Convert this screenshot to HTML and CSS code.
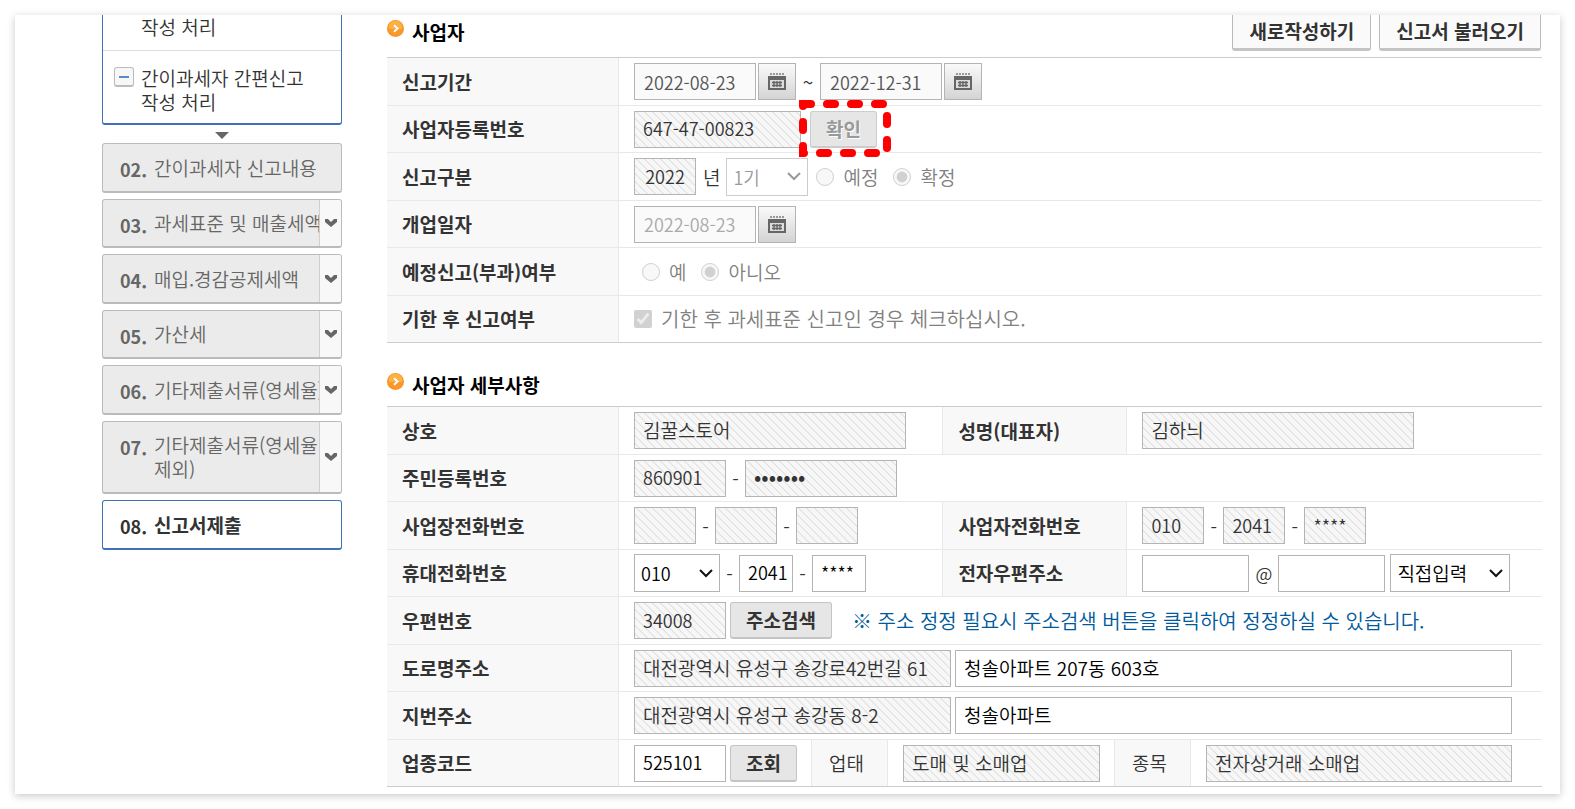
FILE: index.html
```
<!DOCTYPE html>
<html lang="ko">
<head>
  <meta charset="UTF-8">
  <meta name="viewport" content="width=device-width, initial-scale=1.0">
  <title>간이과세자 신고서 작성</title>
  <link rel="stylesheet" href="styles.css">
</head>
<body>
  <svg class="defs" aria-hidden="true">
    <symbol id="calendar" viewBox="0 0 18 17">
      <path d="M2 0h2v2H2zM5 0h2v2H5zM8 0h2v2H8zM11 0h2v2h-2zM14 0h2v2h-2z" fill="#999"/>
      <path d="M0 3h18v14H0z" fill="#666"/>
      <path d="M2 7h14v8H2z" fill="#ddd"/>
      <path d="M4 9.5h10M4 12.5h10M6 8v6M9 8v6M12 8v6" stroke="#666" stroke-width="1.4"/>
    </symbol>
    <symbol id="bullet" viewBox="0 0 17 17">
      <circle cx="8.5" cy="8.5" r="8.5" fill="#f7941d"/>
      <circle cx="8.5" cy="7.5" r="7" fill="#fdb043"/>
      <path d="M1.5 9a7 7 0 0 0 14 0z" fill="#f9982b"/>
      <path d="M7 5.2l3.6 3.3L7 11.8" fill="none" stroke="#fff" stroke-width="2"/>
    </symbol>
    <symbol id="chevron" viewBox="0 0 12 8">
      <path d="M0 0h3l3 3 3-3h3v3L6 8 0 3z" fill="#666"/>
    </symbol>
  </svg>

  <div id="container">
    <nav id="sidebar">
      <ul class="open-step">
        <li><a href="#">작성 처리</a></li>
        <li><button class="fold" aria-label="접기"></button><a href="#">간이과세자 간편신고 작성 처리</a></li>
      </ul>
      <div class="arrow"></div>
      <ol class="steps">
        <li><a href="#"><b>02.</b><span>간이과세자 신고내용</span></a></li>
        <li><a href="#"><b>03.</b><span>과세표준 및 매출세액</span></a><button aria-label="펼치기"><svg><use href="#chevron"/></svg></button></li>
        <li><a href="#"><b>04.</b><span>매입.경감공제세액</span></a><button aria-label="펼치기"><svg><use href="#chevron"/></svg></button></li>
        <li><a href="#"><b>05.</b><span>가산세</span></a><button aria-label="펼치기"><svg><use href="#chevron"/></svg></button></li>
        <li><a href="#"><b>06.</b><span>기타제출서류(영세율)</span></a><button aria-label="펼치기"><svg><use href="#chevron"/></svg></button></li>
        <li><a href="#"><b>07.</b><span>기타제출서류(영세율<br>제외)</span></a><button aria-label="펼치기"><svg><use href="#chevron"/></svg></button></li>
        <li class="current"><a href="#"><b>08.</b><span>신고서제출</span></a></li>
      </ol>
    </nav>

    <main>
      <div class="section-head">
        <h2><svg><use href="#bullet"/></svg>사업자</h2>
        <div class="head-buttons">
          <button>새로작성하기</button>
          <button>신고서 불러오기</button>
        </div>
      </div>
      <table>
        <colgroup><col class="col-label"><col></colgroup>
        <tr>
          <th><label for="from">신고기간</label></th>
          <td><div class="line">
            <input class="date" id="from" value="2022-08-23">
            <button class="cal" aria-label="달력"><svg><use href="#calendar"/></svg></button>
            <span class="tilde">~</span>
            <input class="date" aria-label="종료일" value="2022-12-31">
            <button class="cal" aria-label="달력"><svg><use href="#calendar"/></svg></button>
          </div></td>
        </tr>
        <tr>
          <th><label for="bizno">사업자등록번호</label></th>
          <td><div class="line">
            <input class="ro w-bizno" id="bizno" value="647-47-00823" readonly>
            <span class="marked">
              <button class="btn" disabled>확인</button>
              <svg class="marker" viewBox="0 0 92 58"><path d="M4 7V5H12M28 5h8M52 5h8M76 5h8M88 17v8M88 41v8M77 54h-8M53 54h-8M29 54h-8M5 54H4V47M4 31v-8"/></svg>
            </span>
          </div></td>
        </tr>
        <tr>
          <th><label for="year">신고구분</label></th>
          <td><div class="line">
            <input class="ro w-tel center" id="year" value="2022" readonly>
            <span class="unit">년</span>
            <select class="w-term" aria-label="기수" disabled><option>1기</option></select>
            <label class="choice"><input type="radio" name="kind" disabled>예정</label>
            <label class="choice"><input type="radio" name="kind" checked disabled>확정</label>
          </div></td>
        </tr>
        <tr>
          <th><label for="open">개업일자</label></th>
          <td><div class="line">
            <input class="date" id="open" value="2022-08-23" disabled>
            <button class="cal" aria-label="달력"><svg><use href="#calendar"/></svg></button>
          </div></td>
        </tr>
        <tr>
          <th>예정신고(부과)여부</th>
          <td><div class="line">
            <label class="choice"><input type="radio" name="notice" disabled>예</label>
            <label class="choice"><input type="radio" name="notice" checked disabled>아니오</label>
          </div></td>
        </tr>
        <tr>
          <th>기한 후 신고여부</th>
          <td><div class="line">
            <label class="choice check"><input type="checkbox" checked disabled>기한 후 과세표준 신고인 경우 체크하십시오.</label>
          </div></td>
        </tr>
      </table>

      <div class="section-head detail-head">
        <h2><svg><use href="#bullet"/></svg>사업자 세부사항</h2>
      </div>
      <table>
        <colgroup><col class="col-label"><col class="col-mid"><col class="col-label2"><col></colgroup>
        <tr>
          <th><label for="shop">상호</label></th>
          <td><input class="ro w-name ko" id="shop" value="김꿀스토어" readonly></td>
          <th><label for="owner">성명(대표자)</label></th>
          <td><input class="ro w-name ko" id="owner" value="김하늬" readonly></td>
        </tr>
        <tr>
          <th><label for="jumin">주민등록번호</label></th>
          <td colspan="3"><div class="line">
            <input class="ro w-code" id="jumin" value="860901" readonly>
            <span class="dash">-</span>
            <input class="ro w-secret" type="password" aria-label="주민등록번호 뒷자리" value="1234567" readonly>
          </div></td>
        </tr>
        <tr>
          <th><label for="tel">사업장전화번호</label></th>
          <td><div class="line">
            <input class="ro w-tel" id="tel" readonly>
            <span class="dash">-</span>
            <input class="ro w-tel" aria-label="국번" readonly>
            <span class="dash">-</span>
            <input class="ro w-tel" aria-label="번호" readonly>
          </div></td>
          <th><label for="tel2">사업자전화번호</label></th>
          <td><div class="line">
            <input class="ro w-tel" id="tel2" value="010" readonly>
            <span class="dash">-</span>
            <input class="ro w-tel" aria-label="국번" value="2041" readonly>
            <span class="dash">-</span>
            <input class="ro w-tel" aria-label="번호" value="****" readonly>
          </div></td>
        </tr>
        <tr>
          <th><label for="mobile">휴대전화번호</label></th>
          <td><div class="line">
            <select class="w-mobile" id="mobile"><option>010</option></select>
            <span class="dash">-</span>
            <input class="w-short" aria-label="국번" value="2041">
            <span class="dash">-</span>
            <input class="w-short" aria-label="번호" value="****">
          </div></td>
          <th><label for="mail">전자우편주소</label></th>
          <td><div class="line">
            <input class="w-mail" id="mail">
            <span class="at">@</span>
            <input class="w-mail" aria-label="메일 도메인">
            <select class="w-domain ko" aria-label="도메인 선택"><option>직접입력</option></select>
          </div></td>
        </tr>
        <tr>
          <th><label for="zip">우편번호</label></th>
          <td colspan="3"><div class="line">
            <input class="ro w-code" id="zip" value="34008" readonly>
            <button class="btn">주소검색</button>
            <span class="hint">※ 주소 정정 필요시 주소검색 버튼을 클릭하여 정정하실 수 있습니다.</span>
          </div></td>
        </tr>
        <tr>
          <th><label for="road">도로명주소</label></th>
          <td colspan="3"><div class="line address">
            <input class="ro w-addr ko" id="road" value="대전광역시 유성구 송강로42번길 61" readonly>
            <input class="grow ko" aria-label="도로명 상세주소" value="청솔아파트 207동 603호">
          </div></td>
        </tr>
        <tr>
          <th><label for="lot">지번주소</label></th>
          <td colspan="3"><div class="line address">
            <input class="ro w-addr ko" id="lot" value="대전광역시 유성구 송강동 8-2" readonly>
            <input class="grow ko" aria-label="지번 상세주소" value="청솔아파트">
          </div></td>
        </tr>
        <tr>
          <th><label for="code">업종코드</label></th>
          <td colspan="3"><div class="line address">
            <input class="w-code" id="code" value="525101">
            <button class="btn">조회</button>
            <label class="sub" for="uptae">업태</label>
            <input class="ro w-uptae ko" id="uptae" value="도매 및 소매업" readonly>
            <label class="sub" for="item">종목</label>
            <input class="ro grow ko" id="item" value="전자상거래 소매업" readonly>
          </div></td>
        </tr>
      </table>
    </main>
  </div>
</body>
</html>
```
FILE: styles.css
```
* {
  box-sizing: border-box;
}

body {
  margin: 0;
  padding: 15px;
  background: #fff;
  color: #333;
  font-family: "Noto Sans CJK KR", sans-serif;
  font-size: 19px;
  font-weight: 350;
  line-height: 24px;
}

input, select, button {
  margin: 0;
  font: inherit;
  color: inherit;
}

ul, ol, h2 {
  margin: 0;
  padding: 0;
  list-style: none;
}

a {
  color: inherit;
  text-decoration: none;
}

.defs {
  display: none;
}

#container {
  display: flex;
  align-items: flex-start;
  gap: 45px;
  padding: 0 18px 7px 87px;
  background: #fff;
  box-shadow: 0 2px 8px rgba(0, 0, 0, 0.22);
  overflow: hidden;
}

/* sidebar */
#sidebar {
  flex: 0 0 240px;
}

.open-step {
  border: 1px solid #3f72b5;
  border-width: 0 1px 2px;
  border-radius: 0 0 3px 3px;
}

.open-step li {
  position: relative;
  padding: 15px 28px 9px 38px;
}

.open-step li:first-child {
  padding-top: 0;
  padding-bottom: 11px;
  border-bottom: 1px solid #ddd;
}

.open-step a {
  display: block;
}

.fold {
  position: absolute;
  left: 11px;
  top: 16px;
  width: 20px;
  height: 20px;
  padding: 0 4px;
  border: 1px solid #bbb;
  border-bottom-width: 2px;
  border-radius: 3px;
  background: #f7f7f7;
}

.fold::before {
  content: "";
  display: block;
  height: 2px;
  background: #5b8bc5;
}

.arrow {
  width: 0;
  margin: 7px auto 4px;
  border: 7px solid transparent;
  border-top-color: #666;
  border-bottom: 0;
}

.steps {
  display: grid;
  grid-template-rows: 50px 49px 50px 49px 50px 73px 50px;
  gap: 6px;
}

.steps li {
  display: flex;
  border: 1px solid #bbb;
  border-bottom-width: 2px;
  border-radius: 3px;
  background: #ebebeb;
  color: #666;
  overflow: hidden;
}

.steps a {
  flex: 1;
  display: flex;
  align-items: center;
  min-width: 0;
  padding-left: 17px;
  white-space: nowrap;
  overflow: hidden;
}

.steps b {
  flex: 0 0 34px;
  align-self: flex-start;
  margin-top: 13px;
  font-size: 18px;
  font-weight: 700;
}

.steps button {
  flex: 0 0 22px;
  padding: 0;
  border: 0;
  border-left: 1px solid #d0d0d0;
  background: #f8f8f8;
}

.steps svg {
  display: block;
  width: 12px;
  height: 8px;
  margin: 0 auto;
}

.steps .current {
  border-color: #3f72b5;
  background: #fff;
  color: #333;
  font-weight: bold;
}

/* section titles */
main {
  flex: 1;
  min-width: 0;
}

.section-head {
  display: flex;
  justify-content: space-between;
  align-items: flex-end;
  height: 42px;
  padding-bottom: 6px;
}

.detail-head {
  height: 63px;
  padding-bottom: 2px;
}

h2 {
  display: flex;
  align-items: center;
  gap: 8px;
  padding-bottom: 7px;
  font-size: 19px;
  color: #000;
}

h2 svg {
  width: 17px;
  height: 17px;
  margin-bottom: 7px;
}

.head-buttons {
  display: flex;
  gap: 8px;
  padding-right: 1px;
}

.head-buttons button {
  height: 40px;
  padding: 2px 16px 0;
  border: 1px solid #bbb;
  border-bottom: 3px solid #c4c4c4;
  border-radius: 3px;
  background: #fafafa;
  font-weight: bold;
}

/* form tables */
table {
  width: 100%;
  table-layout: fixed;
  border-spacing: 0;
  border-top: 1px solid #ccc;
}

.col-label {
  width: 232px;
}

.col-mid {
  width: 28%;
}

.col-label2 {
  width: 185px;
}

tr {
  height: 48px;
}

tr:nth-child(even) {
  height: 47px;
}

th, td {
  padding: 0 0 0 15px;
  border-bottom: 1px solid #e8e8e8;
  text-align: left;
}

th {
  border-right: 1px solid #e8e8e8;
  background: #f8f8f8;
}

td + th {
  border-left: 1px solid #e8e8e8;
}

tr:last-child th,
tr:last-child td {
  border-bottom-color: #ccc;
}

.line {
  display: flex;
  align-items: center;
}

input, select {
  display: block;
  height: 37px;
  padding: 0 8px 2px;
  border: 1px solid #b4b4b4;
  border-radius: 0;
  background: #fff;
  color: #000;
  font-size: 18px;
}

.ko {
  font-size: 19px;
}

.ro {
  background: #f7f7f7 linear-gradient(45deg, #e6e6e6 16%, #f7f7f7 16%, #f7f7f7 50%, #e6e6e6 50%, #e6e6e6 66%, #f7f7f7 66%) 0 0 / 8px 8px;
  color: #333;
}

.date {
  width: 122px;
  padding: 0 9px;
  background: #fafafa;
  color: #555;
}

.date:disabled {
  color: #aaa;
}

select {
  appearance: none;
  height: 38px;
  padding: 0 6px;
  background: #fff url("data:image/svg+xml,%3Csvg xmlns='http://www.w3.org/2000/svg' width='14' height='9'%3E%3Cpath d='M1 1l6 6 6-6' fill='none' stroke='%23111' stroke-width='2'/%3E%3C/svg%3E") no-repeat right 6px center;
}

select:disabled {
  border-color: #ccc;
  background-image: url("data:image/svg+xml,%3Csvg xmlns='http://www.w3.org/2000/svg' width='14' height='9'%3E%3Cpath d='M1 1l6 6 6-6' fill='none' stroke='%23999' stroke-width='2'/%3E%3C/svg%3E");
  color: #999;
  opacity: 1;
}

.cal {
  width: 38px;
  height: 37px;
  margin-left: 2px;
  padding: 0;
  border: 1px solid #b4b4b4;
  background: linear-gradient(#fafafa, #d4d4d4);
}

.cal svg {
  display: block;
  width: 18px;
  height: 17px;
  margin: 0 auto;
}

.tilde {
  width: 24px;
  text-align: center;
}

.dash {
  width: 19px;
  padding-top: 2px;
  text-align: center;
}

.at {
  width: 29px;
  text-align: center;
  font-size: 18px;
}

.unit {
  padding: 0 6px 0 7px;
}

.center {
  text-align: center;
}

.w-bizno { width: 167px; }
.w-tel { width: 62px; }
.w-term { width: 82px; }
.w-name { width: 272px; }
.w-code { width: 92px; }
.w-secret { width: 152px; padding-bottom: 6px; font-size: 22px; }
.w-mobile { width: 86px; }
.w-short { width: 54px; padding-right: 0; }
.w-mail { width: 107px; }
.w-domain { width: 120px; margin-left: 5px; }
.w-addr { width: 317px; }
.w-uptae { width: 197px; }

.grow {
  flex: 1;
  min-width: 0;
}

.btn {
  height: 37px;
  margin-left: 4px;
  padding: 0 15px;
  border: 1px solid #c4c4c4;
  border-bottom-width: 2px;
  border-radius: 3px;
  background: #e6e6e6;
  font-weight: bold;
  white-space: nowrap;
}

.btn:disabled {
  border-color: #ccc;
  color: #999;
  text-shadow: 1px 1px 0 #fff;
}

.marked {
  position: relative;
  margin-left: 5px;
}

.marker {
  position: absolute;
  left: -7px;
  top: -12px;
  width: 92px;
  height: 58px;
  fill: none;
  stroke: #f00;
  stroke-width: 8px;
  stroke-linecap: round;
  pointer-events: none;
}

.choice {
  display: flex;
  align-items: center;
  margin-left: 8px;
  color: #808080;
}

.choice + .choice {
  margin-left: 15px;
}

.choice input {
  width: 18px;
  height: 18px;
  margin-right: 9px;
}

.check {
  margin-left: 0;
  font-size: 20px;
}

.hint {
  margin-left: 20px;
  font-size: 20px;
  color: #005a9c;
  white-space: nowrap;
}

.address {
  gap: 4px;
  padding-right: 30px;
}

.address .btn {
  margin-left: 0;
}

.sub {
  width: 77px;
  height: 46px;
  margin: 0 11px 0 10px;
  padding-left: 17px;
  border: 1px solid #e8e8e8;
  border-width: 0 1px;
  background: #f8f8f8;
  line-height: 46px;
}
```
